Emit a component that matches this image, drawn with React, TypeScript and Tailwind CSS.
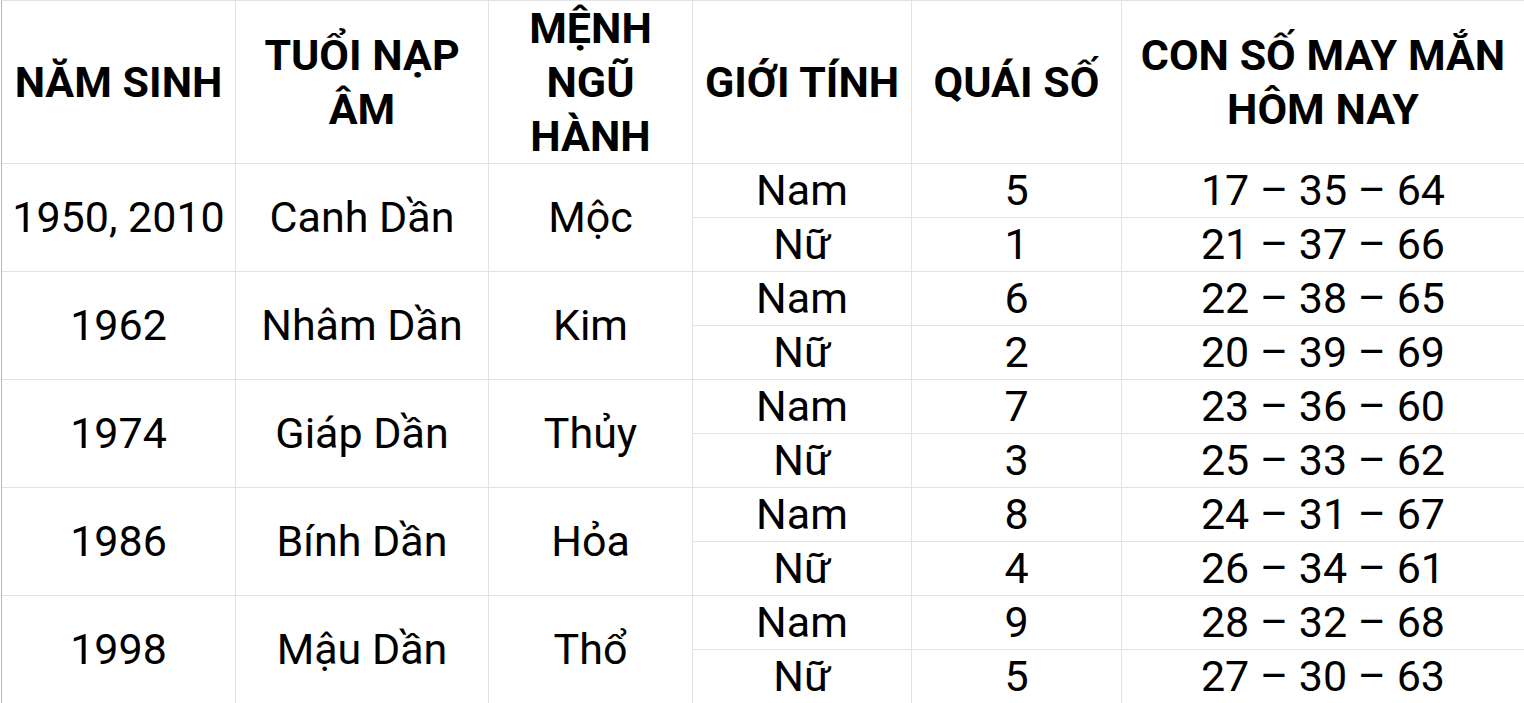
import React from "react";

const groups = [
  { year: "1950, 2010", tuoi: "Canh Dần", menh: "Mộc", rows: [["Nam", "5", "17 – 35 – 64"], ["Nữ", "1", "21 – 37 – 66"]] },
  { year: "1962", tuoi: "Nhâm Dần", menh: "Kim", rows: [["Nam", "6", "22 – 38 – 65"], ["Nữ", "2", "20 – 39 – 69"]] },
  { year: "1974", tuoi: "Giáp Dần", menh: "Thủy", rows: [["Nam", "7", "23 – 36 – 60"], ["Nữ", "3", "25 – 33 – 62"]] },
  { year: "1986", tuoi: "Bính Dần", menh: "Hỏa", rows: [["Nam", "8", "24 – 31 – 67"], ["Nữ", "4", "26 – 34 – 61"]] },
  { year: "1998", tuoi: "Mậu Dần", menh: "Thổ", rows: [["Nam", "9", "28 – 32 – 68"], ["Nữ", "5", "27 – 30 – 63"]] },
];

const headers = ["NĂM SINH", "TUỔI NẠP ÂM", "MỆNH NGŨ HÀNH", "GIỚI TÍNH", "QUÁI SỐ", "CON SỐ MAY MẮN HÔM NAY"];

const cell = "flex items-center justify-center text-center border-r border-b border-[#e2e2e2]";

export default function App() {
  return (
    <div className="w-[1524px] h-[703px] overflow-hidden bg-white" style={{ fontFamily: "Roboto, 'Noto Sans', sans-serif" }}>
      <div className="ml-px grid grid-cols-[234px_253px_204px_219px_210px_403px] grid-rows-[163px_repeat(10,54px)] border-t border-l border-t-[#e2e2e2] border-l-[#b8b8b8] text-black">
        {headers.map((h) => (
          <div key={h} className={`${cell} px-1 text-[43px] leading-[54px] font-bold`}>
            {h}
          </div>
        ))}
        {groups.map((g) => (
          <React.Fragment key={g.year}>
            <div className={`${cell} row-span-2 text-[43px]`}>{g.year}</div>
            <div className={`${cell} row-span-2 text-[43px]`}>{g.tuoi}</div>
            <div className={`${cell} row-span-2 text-[43px]`}>{g.menh}</div>
            {g.rows.map((r, i) => (
              <React.Fragment key={i}>
                <div className={`${cell} text-[43px]`}>{r[0]}</div>
                <div className={`${cell} text-[43px]`}>{r[1]}</div>
                <div className={`${cell} text-[43px]`}>{r[2]}</div>
              </React.Fragment>
            ))}
          </React.Fragment>
        ))}
      </div>
    </div>
  );
}
